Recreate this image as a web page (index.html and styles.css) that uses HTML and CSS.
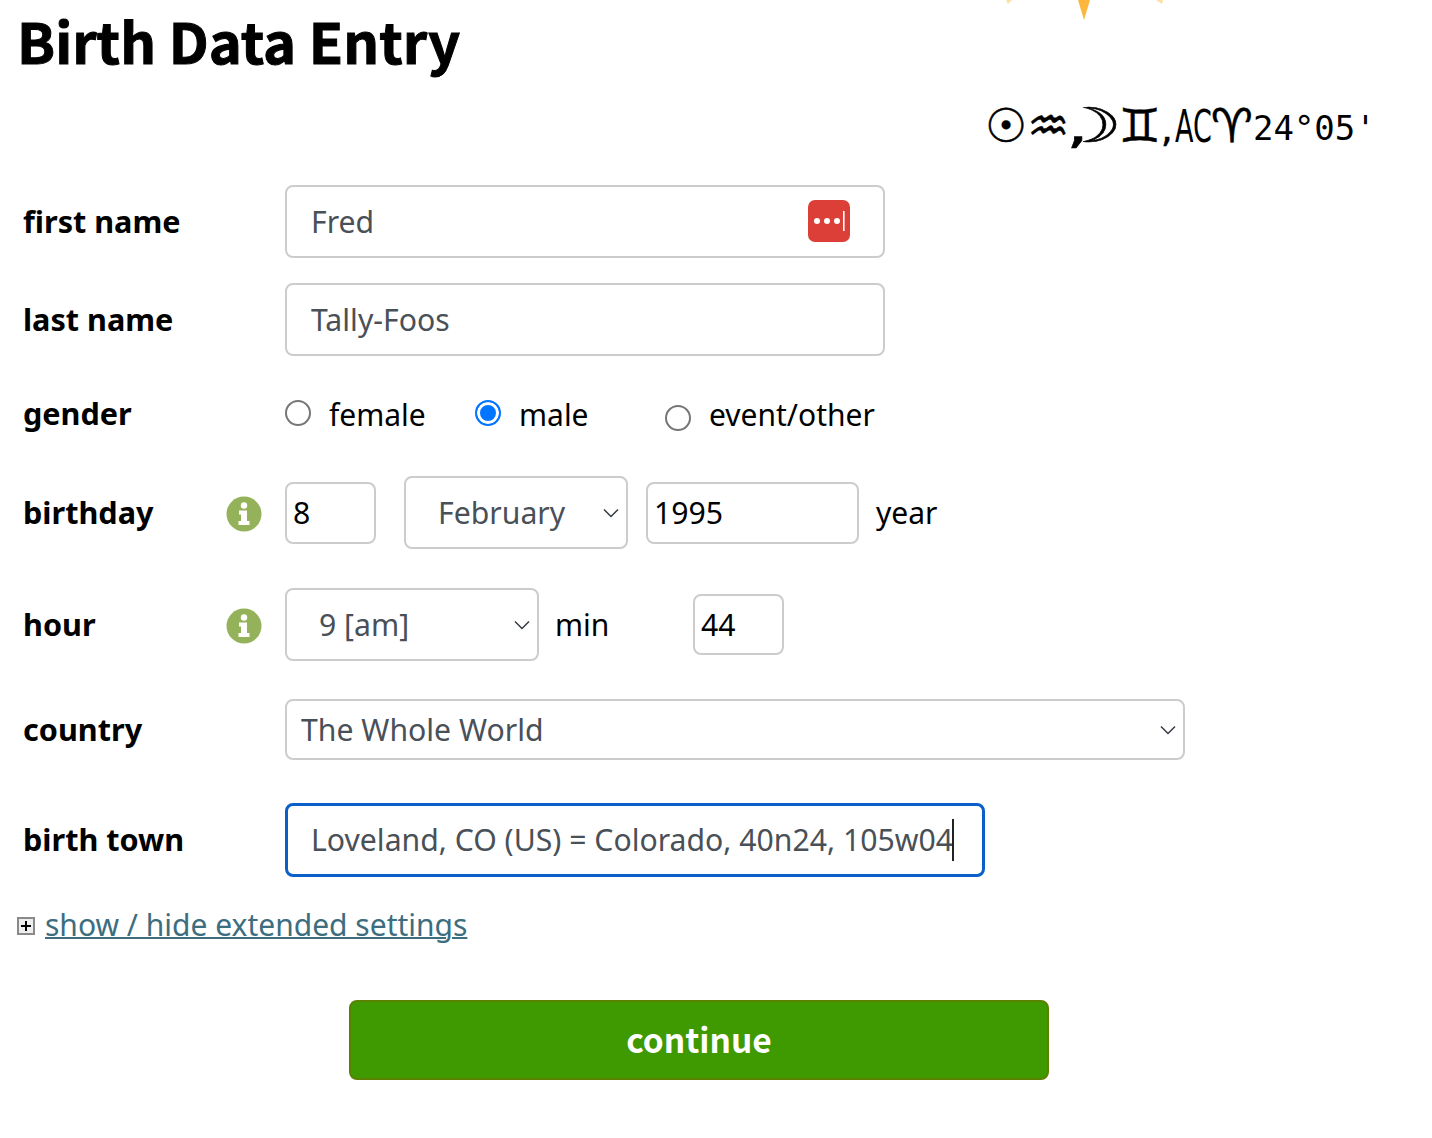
FILE: index.html
```html
<!DOCTYPE html>
<html>
<head>
    <meta charset="utf-8">
    <title>Birth Data Entry</title>
    <link rel="stylesheet" href="styles.css">
</head>
<body>

<svg class="star" width="170" height="24" viewBox="0 0 170 24">
  <polygon points="72,0 84,0 78,20" fill="#fdb73e"/>
  <polygon points="0,0 6,0 2,4" fill="#fde0a8"/>
  <polygon points="150,0 157,0 156,4" fill="#fde0a8"/>
</svg>

<h1 class="title">Birth Data Entry</h1>

<div class="chart-line">
  <span class="sym">☉</span><span class="sym water">♒</span><span class="sym moon">,☽</span><span class="sym">♊</span><span class="comma">,</span><span class="asc">AC</span><span class="sym">♈</span><span class="deg">24°05'</span>
</div>

<form class="birth-form">
  <div class="row row-name">
    <label class="lbl">first name</label>
    <div class="field-wrap">
      <input type="text" class="txt txt-name" value="Fred">
      <svg class="pw-icon" width="42" height="42" viewBox="0 0 42 42">
        <rect width="42" height="42" rx="7" fill="#dc3f38"/>
        <circle cx="9" cy="21" r="3" fill="#fff"/>
        <circle cx="19" cy="21" r="3" fill="#fff"/>
        <circle cx="29" cy="21" r="3" fill="#fff"/>
        <rect x="35" y="11" width="1.6" height="20" fill="#fff"/>
      </svg>
    </div>
  </div>

  <div class="row row-name">
    <label class="lbl">last name</label>
    <input type="text" class="txt txt-name" value="Tally-Foos">
  </div>

  <div class="row row-gender">
    <label class="lbl">gender</label>
    <label class="opt opt-female"><input type="radio" name="gender"> female</label>
    <label class="opt opt-male"><input type="radio" name="gender" checked> male</label>
    <label class="opt opt-other"><input type="radio" name="gender"> event/other</label>
  </div>

  <div class="row row-birthday">
    <label class="lbl">birthday</label>
    <svg class="info" width="36" height="36" viewBox="0 0 36 36">
      <circle cx="18" cy="18" r="17.5" fill="#94b259"/>
      <circle cx="18" cy="9.5" r="3.2" fill="#fff"/>
      <path d="M13 14.5h8v10.5h2.5v4h-11v-4H15v-6.500h-2z" fill="#fff"/>
    </svg>
    <input type="text" class="small" value="8">
    <div class="select-wrap month">
      <select class="sel"><option>February</option></select>
      <svg class="chev" width="18" height="10" viewBox="0 0 18 10"><path d="M2 1.500l7 7 7-7" fill="none" stroke="#343a40" stroke-width="1.500"/></svg>
    </div>
    <input type="text" class="small year" value="1995">
    <span class="plain year-lbl">year</span>
  </div>

  <div class="row row-hour">
    <label class="lbl">hour</label>
    <svg class="info" width="36" height="36" viewBox="0 0 36 36">
      <circle cx="18" cy="18" r="17.5" fill="#94b259"/>
      <circle cx="18" cy="9.5" r="3.2" fill="#fff"/>
      <path d="M13 14.500h8v10.500h2.500v4h-11v-4H15v-6.500h-2z" fill="#fff"/>
    </svg>
    <div class="select-wrap hour">
      <select class="sel"><option>9 [am]</option></select>
      <svg class="chev" width="18" height="10" viewBox="0 0 18 10"><path d="M2 1.500l7 7 7-7" fill="none" stroke="#343a40" stroke-width="1.500"/></svg>
    </div>
    <span class="plain min-lbl">min</span>
    <input type="text" class="small min" value="44">
  </div>

  <div class="row row-country">
    <label class="lbl">country</label>
    <div class="select-wrap country">
      <select class="sel"><option>The Whole World</option></select>
      <svg class="chev" width="18" height="10" viewBox="0 0 18 10"><path d="M2 1.500l7 7 7-7" fill="none" stroke="#343a40" stroke-width="1.500"/></svg>
    </div>
  </div>

  <div class="row row-town">
    <label class="lbl">birth town</label>
    <div class="field-wrap">
      <input type="text" class="txt txt-town" value="Loveland, CO (US) = Colorado, 40n24, 105w04">
      <span class="caret"></span>
    </div>
  </div>

  <div class="ext-row">
    <span class="plus-box"></span>
    <a href="#" class="ext-link">show / hide extended settings</a>
  </div>

  <div class="btn-row">
    <button type="button" class="continue">continue</button>
  </div>
</form>

</body>
</html>
```

FILE: styles.css
```css
* {box-sizing: border-box}

body {
  margin: 0;
  height: 1138px;
  overflow: hidden;
  position: relative;
  background: #fff;
  color: #000;
  font-family: "Noto Sans", "Open Sans", sans-serif;
  font-size: 30px;
}

.star {
  position: absolute;
  top: 0;
  left: 1006px;
}

.title {
  margin: 0;
  padding: 0 0 0 17px;
  height: 84px;
  font-family: "Noto Sans CJK JP", "Noto Sans", sans-serif;
  font-size: 56px;
  font-weight: 700;
  line-height: 80px;
  -webkit-text-stroke: 1px #000;
}

.chart-line {
  height: 101px;
  padding: 13px 0 0 985px;
  display: flex;
  align-items: baseline;
  white-space: nowrap;
  font-family: "DejaVu Sans", sans-serif;
  font-size: 47px;
  line-height: 56px;
}

.sym {
  -webkit-text-stroke: 0.5px #000;
}

.water {
  letter-spacing: -3px;
}

.comma {
  font-size: 38px;
  -webkit-text-stroke: 0.5px #000;
}

/* the comma sits in the moon's empty left side */
.moon {
  display: inline-block;
  margin-right: 36px;
  font-size: 48px;
  letter-spacing: -21px;
  transform: scaleX(1.5);
  transform-origin: left;
}

.asc {
  display: inline-block;
  width: 36px;
  margin-left: 2px;
  font-size: 45px;
  transform: scaleX(0.6);
  transform-origin: left;
}

.deg {
  font-family: "DejaVu Sans Mono", monospace;
  font-size: 34px;
  transform: translateY(-2px);
}

.birth-form {
  margin: 0;
}

.row {
  display: flex;
  align-items: center;
}

.lbl {
  width: 285px;
  padding: 0 0 2px 23px;
  font-size: 30.6px;
  font-weight: 700;
  flex-shrink: 0;
}

.row-birthday .lbl, .row-hour .lbl {
  width: 226px;
}

.row-name {
  height: 73px;
  margin-bottom: 25px;
}

.row-gender {
  height: 46px;
  margin-top: 35px;
}

.row-birthday {
  height: 73px;
  margin-top: 39px;
}

.row-hour {
  height: 73px;
  margin-top: 39px;
}

.row-country {
  height: 61px;
  margin-top: 38px;
}

.row-town {
  height: 74px;
  margin-top: 43px;
}

.info {
  margin: 2px 23px 0 0;
  flex-shrink: 0;
}

input[type=text], .sel {
  font-family: inherit;
  font-size: 30.2px;
  background: #fff;
  border: 2px solid #ccc;
  border-radius: 8px;
  outline: none;
}

.field-wrap {
  position: relative;
}

.txt {
  display: block;
  height: 73px;
  padding: 0 24px;
  color: #495057;
}

.txt-name {
  width: 600px;
}

input.txt-town {
  width: 700px;
  height: 74px;
  border: 3px solid #0a5fc9;
  padding: 0 23px 2px;
}

.caret {
  position: absolute;
  left: 667px;
  top: 16px;
  width: 2px;
  height: 42px;
  background: #222;
}

.pw-icon {
  position: absolute;
  left: 523px;
  top: 15px;
}

.small {
  height: 62px;
  width: 91px;
  padding: 0 6px;
  color: #000;
}

.small.year {
  width: 213px;
  margin-left: 18px;
}

.small.min {
  margin-left: 84px;
  height: 61px;
}

.select-wrap {
  position: relative;
}

.sel {
  display: block;
  width: 100%;
  height: 100%;
  appearance: none;
  color: #495057;
  padding: 0 0 0 32px;
}

.select-wrap.month {
  width: 224px;
  height: 73px;
  margin-left: 28px;
}

.select-wrap.hour {
  width: 254px;
  height: 73px;
}

.select-wrap.country {
  width: 900px;
  height: 61px;
}

.select-wrap.country .sel {
  padding-left: 14px;
}

.chev {
  position: absolute;
  right: 8px;
  top: 50%;
  margin-top: -5px;
  pointer-events: none;
}

.plain {
  white-space: nowrap;
}

.year-lbl {
  margin-left: 17px;
}

.min-lbl {
  margin-left: 16px;
  width: 54px;
}

.opt {
  display: flex;
  align-items: center;
  white-space: nowrap;
}

.opt input {
  appearance: none;
  width: 26px;
  height: 26px;
  margin: 0 18px 0 0;
  border: 2px solid #767676;
  border-radius: 50%;
  background: #fff;
  flex-shrink: 0;
}

.opt input:checked {
  border: 2px solid #0075ff;
  background: #0075ff;
  box-shadow: inset 0 0 0 3px #fff;
}

.opt-female input, .opt-male input {
  position: relative;
  top: -1px;
}

.opt-other input {
  position: relative;
  top: 4px;
}

.opt-female {
  width: 190px;
}

.opt-male {
  width: 190px;
}

.ext-row {
  display: flex;
  align-items: center;
  height: 44px;
  margin-top: 25px;
  padding-left: 17px;
}

.plus-box {
  position: relative;
  width: 18px;
  height: 18px;
  margin-right: 10px;
  margin-top: 4px;
  border: 2px solid #8a8a8a;
  background: #eee;
}

.plus-box::before, .plus-box::after {
  content: "";
  position: absolute;
  background: #000;
}

.plus-box::before {
  left: 2px;
  top: 6px;
  width: 10px;
  height: 2px;
}

.plus-box::after {
  left: 6px;
  top: 2px;
  width: 2px;
  height: 10px;
}

.ext-link {
  color: #3c6e80;
  text-decoration-thickness: 2px;
}

.btn-row {
  margin-top: 54px;
  padding-left: 349px;
}

.continue {
  display: block;
  width: 700px;
  height: 80px;
  padding: 0 0 4px;
  background-color: #3f9900;
  color: #fff;
  border: 2px solid #5a8200;
  border-radius: 8px;
  font-family: "Noto Sans CJK JP", "Noto Sans", sans-serif;
  font-size: 33.5px;
  font-weight: 700;
}
```
